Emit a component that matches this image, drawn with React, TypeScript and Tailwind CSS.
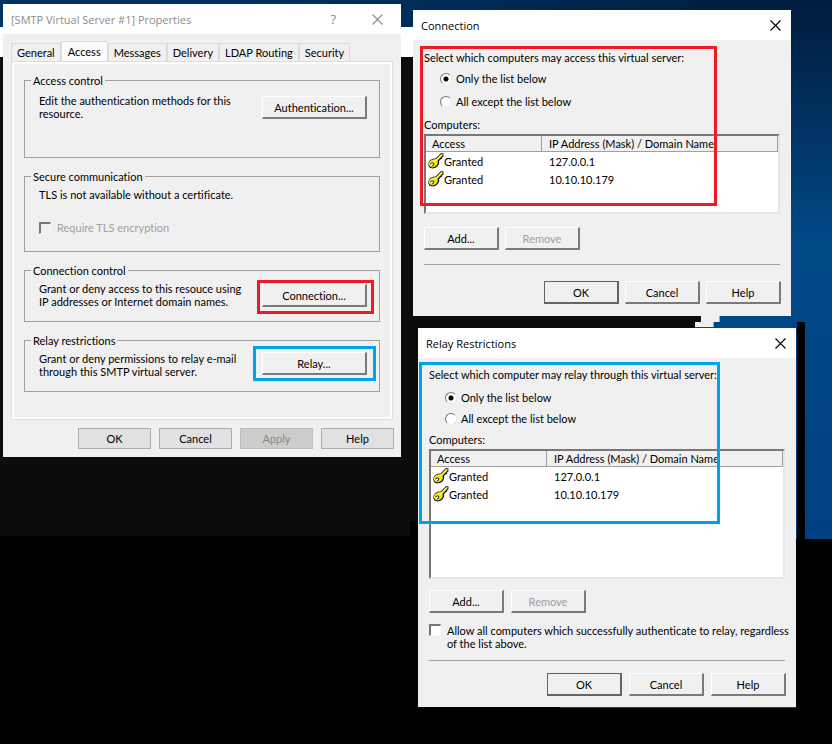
import { useState } from 'react';
import type { ReactNode } from 'react';
import clsx from 'clsx';

const TABS = ['General', 'Access', 'Messages', 'Delivery', 'LDAP Routing', 'Security'];

const COMPUTERS = [
    { access: 'Granted', address: '127.0.0.1' },
    { access: 'Granted', address: '10.10.10.179' },
];

const CloseIcon = () => (
    <svg className="h-[11px] w-[11px]" viewBox="0 0 11 11" fill="none" stroke="currentColor" strokeWidth="1.1">
        <path d="M0.5 0.5 L10.5 10.5 M10.5 0.5 L0.5 10.5" />
    </svg>
);

const KeyIcon = () => (
    <svg className="h-4 w-4 shrink-0" viewBox="0 0 16 16">
        <path
            d="M12.8 0.2 L15.4 0.2 L15.4 3.4 L14.2 4.2 L14 5.8 L12.4 6.4 L11 8.2 L11.2 10.6 L9.8 13 L7.6 14.8 L4.6 15.6 L1.6 14.8 L0.4 12.4 L0.6 9.4 L2.2 7 L5 5.8 L7.6 5.6 Z"
            fill="#111"
        />
        <path
            d="M13.2 1 L14.6 1 L14.4 2.8 L11.6 5.6 L9.6 7.8 L9.8 10.2 L8.8 12.2 L6.8 13.8 L4.4 14.4 L2.2 13.8 L1 12 L1 9.8 L2.6 7.4 L5.2 6.4 L8 6.2 Z"
            fill="#f4ea10"
        />
        <path d="M13 2 L8.4 6.8 L5 7.8" stroke="#fffca0" strokeWidth="0.9" fill="none" />
        <path d="M2.2 11.2 L4 9.8 L5.8 10.4 L5.6 12.2 L3.6 13.2" fill="#fff" stroke="#222" strokeWidth="1" />
    </svg>
);

interface ButtonProps {
    children: ReactNode;
    kind?: 'classic' | 'default' | 'flat';
    disabled?: boolean;
    className?: string;
}

const Button = ({ children, kind = 'classic', disabled, className }: ButtonProps) => (
    <button
        type="button"
        disabled={disabled}
        className={clsx(
            'text-center',
            kind === 'flat' && 'h-[21px] w-[73px] border',
            kind === 'flat' && (disabled ? 'border-[#bfbfbf] bg-[#cccccc] text-[#8a8a8a]' : 'border-[#adadad] bg-[#e1e1e1]'),
            kind === 'classic' &&
                'h-[23px] border-t border-r-2 border-b-2 border-l border-t-white border-r-[#7a7a7a] border-b-[#7a7a7a] border-l-white',
            kind === 'classic' && disabled && 'text-[#a0a0a0]',
            kind === 'default' && 'h-[23px] border border-r-2 border-b-2 border-[#646464]',
            className ?? (kind !== 'flat' && 'w-[75px]'),
        )}
    >
        {children}
    </button>
);

interface TitleBarProps {
    title: string;
    inactive?: boolean;
}

const TitleBar = ({ title, inactive }: TitleBarProps) => (
    <header
        className={clsx(
            "flex h-[30px] items-center bg-white pl-2 font-['Open_Sans',sans-serif]",
            inactive ? 'pr-[18px] text-[#8c8c8c]' : 'pr-[10px] text-black',
        )}
    >
        <h2 className="flex-1">{title}</h2>
        {inactive && (
            <button type="button" aria-label="Help" className="mr-9 text-[13px]">
                ?
            </button>
        )}
        <button type="button" aria-label="Close">
            <CloseIcon />
        </button>
    </header>
);

interface GroupProps {
    title: string;
    className?: string;
    children: ReactNode;
}

const Group = ({ title, className, children }: GroupProps) => (
    <fieldset className={clsx('border border-[#a0a0a0] pr-3 pl-[14px]', className)}>
        <legend className="-ml-2 px-[2px]">{title}</legend>
        {children}
    </fieldset>
);

const checkboxStyle =
    'h-3 w-3 shrink-0 appearance-none border-t-2 border-l-2 border-r border-b border-t-[#777] border-l-[#777] border-r-[#f8f8f8] border-b-[#f8f8f8] bg-white checked:bg-[#333] disabled:bg-[#f0f0f0]';

const radioStyle =
    'h-3 w-3 shrink-0 appearance-none rounded-full border border-t-[#777] border-l-[#777] border-r-[#e8e8e8] border-b-[#e8e8e8] bg-white checked:bg-[radial-gradient(circle,#000_0_2px,#fff_3px)]';

interface AccessOptionsProps {
    name: string;
    caption: string;
    className: string;
}

const AccessOptions = ({ name, caption, className }: AccessOptionsProps) => (
    <div role="radiogroup" aria-label={caption}>
        <p>{caption}</p>
        <div className={clsx('flex flex-col pl-4', className)}>
            <label className="flex items-center gap-1">
                <input type="radio" name={name} defaultChecked className={radioStyle} />
                Only the list below
            </label>
            <label className="flex items-center gap-1">
                <input type="radio" name={name} className={radioStyle} />
                All except the list below
            </label>
        </div>
    </div>
);

const ComputerList = ({ className }: { className: string }) => (
    <div
        className={clsx(
            'mt-[3px] border-t-2 border-r-2 border-b-2 border-l-2 border-t-[#777] border-r-[#e6e6e6] border-b-[#e6e6e6] border-l-[#777] bg-white',
            className,
        )}
    >
        <table className="w-full table-fixed border-separate border-spacing-0 text-left">
            <thead>
                <tr className="h-4 bg-[#f0f0f0]">
                    <th className="w-[116px] border-r border-b border-[#a0a0a0] p-0 pl-[6px] font-normal">Access</th>
                    <th className="border-r border-b border-[#a0a0a0] p-0 pl-[7px] font-normal whitespace-nowrap">
                        IP Address (Mask) / Domain Name
                    </th>
                </tr>
            </thead>
            <tbody>
                {COMPUTERS.map((computer) => (
                    <tr key={computer.address} className="h-[18px]">
                        <td className="p-0 pl-[2px]">
                            <span className="flex items-center">
                                <KeyIcon />
                                {computer.access}
                            </span>
                        </td>
                        <td className="p-0 pl-[7px]">{computer.address}</td>
                    </tr>
                ))}
            </tbody>
        </table>
    </div>
);

const PropertiesWindow = () => {
    const [tab, setTab] = useState('Access');

    return (
        <section className="absolute top-1 left-[3px] w-[398px] bg-[#f0f0f0] pb-2">
            <TitleBar title="[SMTP Virtual Server #1] Properties" inactive />

            <div className="px-2 pt-[7px]">
                <div role="tablist" className="flex items-end">
                    {TABS.map((name) => (
                        <button
                            key={name}
                            type="button"
                            role="tab"
                            aria-selected={tab === name}
                            onClick={() => setTab(name)}
                            className={clsx(
                                'border border-b-0 border-[#dcdcdc]',
                                tab === name ? 'h-5 bg-[#fbfbfb] px-[6px] pb-[1px]' : 'h-[18px] px-[5px]',
                            )}
                        >
                            {name}
                        </button>
                    ))}
                </div>

                <div role="tabpanel" className="border border-[#dcdcdc]">
                    <div className="flex flex-col gap-3 border-2 border-white px-[10px] pt-[10px] pb-[25px]">
                        <Group title="Access control" className="h-[84px]">
                            <div className="flex items-start justify-between pt-[7px]">
                                <p>
                                    Edit the authentication methods for this
                                    <br />
                                    resource.
                                </p>
                                <Button className="mt-[2px] w-[105px]">Authentication...</Button>
                            </div>
                        </Group>

                        <Group title="Secure communication" className="h-[82px]">
                            <p className="pt-[5px]">TLS is not available without a certificate.</p>
                            <label className="mt-5 flex items-center gap-[6px] text-[#a0a0a0]">
                                <input type="checkbox" disabled className={checkboxStyle} />
                                Require TLS encryption
                            </label>
                        </Group>

                        <Group title="Connection control" className="h-[58px]">
                            <div className="flex items-start justify-between pt-[5px]">
                                <p>
                                    Grant or deny access to this resouce using
                                    <br />
                                    IP addresses or Internet domain names.
                                </p>
                                <div className="relative mt-[2px]">
                                    <Button className="w-[105px]">Connection...</Button>
                                    <div className="pointer-events-none absolute -top-1 -right-[7px] -bottom-[7px] -left-[5px] border-3 border-[#ed1c24]" />
                                </div>
                            </div>
                        </Group>

                        <Group title="Relay restrictions" className="h-[58px]">
                            <div className="flex items-start justify-between pt-[5px]">
                                <p>
                                    Grant or deny permissions to relay e-mail
                                    <br />
                                    through this SMTP virtual server.
                                </p>
                                <div className="relative">
                                    <Button className="w-[105px]">Relay...</Button>
                                    <div className="pointer-events-none absolute -top-[6px] -right-[9px] -bottom-[6px] -left-[9px] border-3 border-[#00a2e8]" />
                                </div>
                            </div>
                        </Group>
                    </div>
                </div>
            </div>

            <footer className="flex justify-end gap-2 pt-2 pr-[7px]">
                <Button kind="flat">OK</Button>
                <Button kind="flat">Cancel</Button>
                <Button kind="flat" disabled>
                    Apply
                </Button>
                <Button kind="flat">Help</Button>
            </footer>
        </section>
    );
};

const ConnectionWindow = () => (
    <section className="absolute top-[10px] left-[413px] w-[378px] bg-[#f0f0f0] pb-3">
        <TitleBar title="Connection" />
        <div className="px-[11px] pt-[11px]">
            <AccessOptions name="connection" caption="Select which computers may access this virtual server:" className="gap-[10px] pt-2 pb-[10px]" />
            <p>Computers:</p>
            <ComputerList className="h-[80px]" />
            <div className="mt-[13px] flex gap-[6px]">
                <Button>Add...</Button>
                <Button disabled>Remove</Button>
            </div>
        </div>
        <hr className="mx-[11px] mt-[14px] border-t border-[#a0a0a0]" />
        <footer className="mt-4 flex justify-end gap-[6px] pr-[10px]">
            <Button kind="default">OK</Button>
            <Button>Cancel</Button>
            <Button>Help</Button>
        </footer>
        <div className="pointer-events-none absolute top-9 left-[7px] h-[160px] w-[297px] border-3 border-[#ed1c24]" />
    </section>
);

const RelayWindow = () => (
    <section className="absolute top-[328px] left-[418px] w-[378px] bg-[#f0f0f0] pb-[11px]">
        <TitleBar title="Relay Restrictions" />
        <div className="px-[11px] pt-[10px]">
            <AccessOptions name="relay" caption="Select which computer may relay through this virtual server:" className="gap-2 pt-[10px] pb-2" />
            <p>Computers:</p>
            <ComputerList className="h-[130px]" />
            <div className="mt-[11px] flex gap-[7px]">
                <Button>Add...</Button>
                <Button disabled>Remove</Button>
            </div>
            <label className="mt-[11px] flex items-start gap-[6px]">
                <input type="checkbox" className={checkboxStyle} />
                <span className="whitespace-nowrap">
                    Allow all computers which successfully authenticate to relay, regardless
                    <br />
                    of the list above.
                </span>
            </label>
        </div>
        <hr className="mx-[11px] mt-[10px] border-t border-[#a0a0a0]" />
        <footer className="mt-3 flex justify-end gap-[7px] pr-[10px]">
            <Button kind="default">OK</Button>
            <Button>Cancel</Button>
            <Button>Help</Button>
        </footer>
        <div className="pointer-events-none absolute top-[34px] left-[1px] h-[162px] w-[301px] border-3 border-[#00a2e8]" />
    </section>
);

// Wallpaper with a console window behind the dialogs
const Desktop = () => (
    <div aria-hidden="true">
        <div className="absolute inset-x-0 top-0 h-[27px] bg-linear-to-r from-[#003264] via-[#002c5a] to-[#001c3c]" />
        <div className="absolute top-0 right-0 h-[539px] w-[137px] bg-linear-to-b from-[#001c3c] via-[#004a88] via-45% to-[#004080]" />
        <div className="absolute top-[27px] left-0 h-[30px] w-1 bg-white" />
        <div className="absolute top-[27px] left-[401px] h-[30px] w-3 bg-white" />
        <div className="absolute top-[57px] left-0 h-[479px] w-[410px] bg-[#0c0c0c]" />
        <div className="absolute top-[57px] left-[410px] h-[464px] w-[285px] bg-[#0c0c0c]" />
        <div className="absolute top-[316px] left-[695px] h-[6px] w-[6px] bg-[#0c0c0c]" />
        <div className="absolute top-[316px] left-[701px] h-[6px] w-[19px] border-r border-[#4cb8f0] bg-[#f0f0f0]" />
        <div className="absolute top-[322px] left-[695px] h-[5px] w-[19px] border-r border-[#4cb8f0] bg-[#f0f0f0]" />
        <div className="absolute top-[322px] left-[797px] h-[222px] w-2 bg-black" />
        <div className="absolute top-[707px] left-[560px] h-px w-[236px] bg-[#004a88]" />
    </div>
);

export default function App() {
    return (
        <main className="relative min-h-screen overflow-hidden bg-black font-[Lato,'Liberation_Sans',sans-serif] text-[11px] leading-[13px] text-black [font-variant-ligatures:none]">
            <Desktop />
            <PropertiesWindow />
            <ConnectionWindow />
            <RelayWindow />
        </main>
    );
}
